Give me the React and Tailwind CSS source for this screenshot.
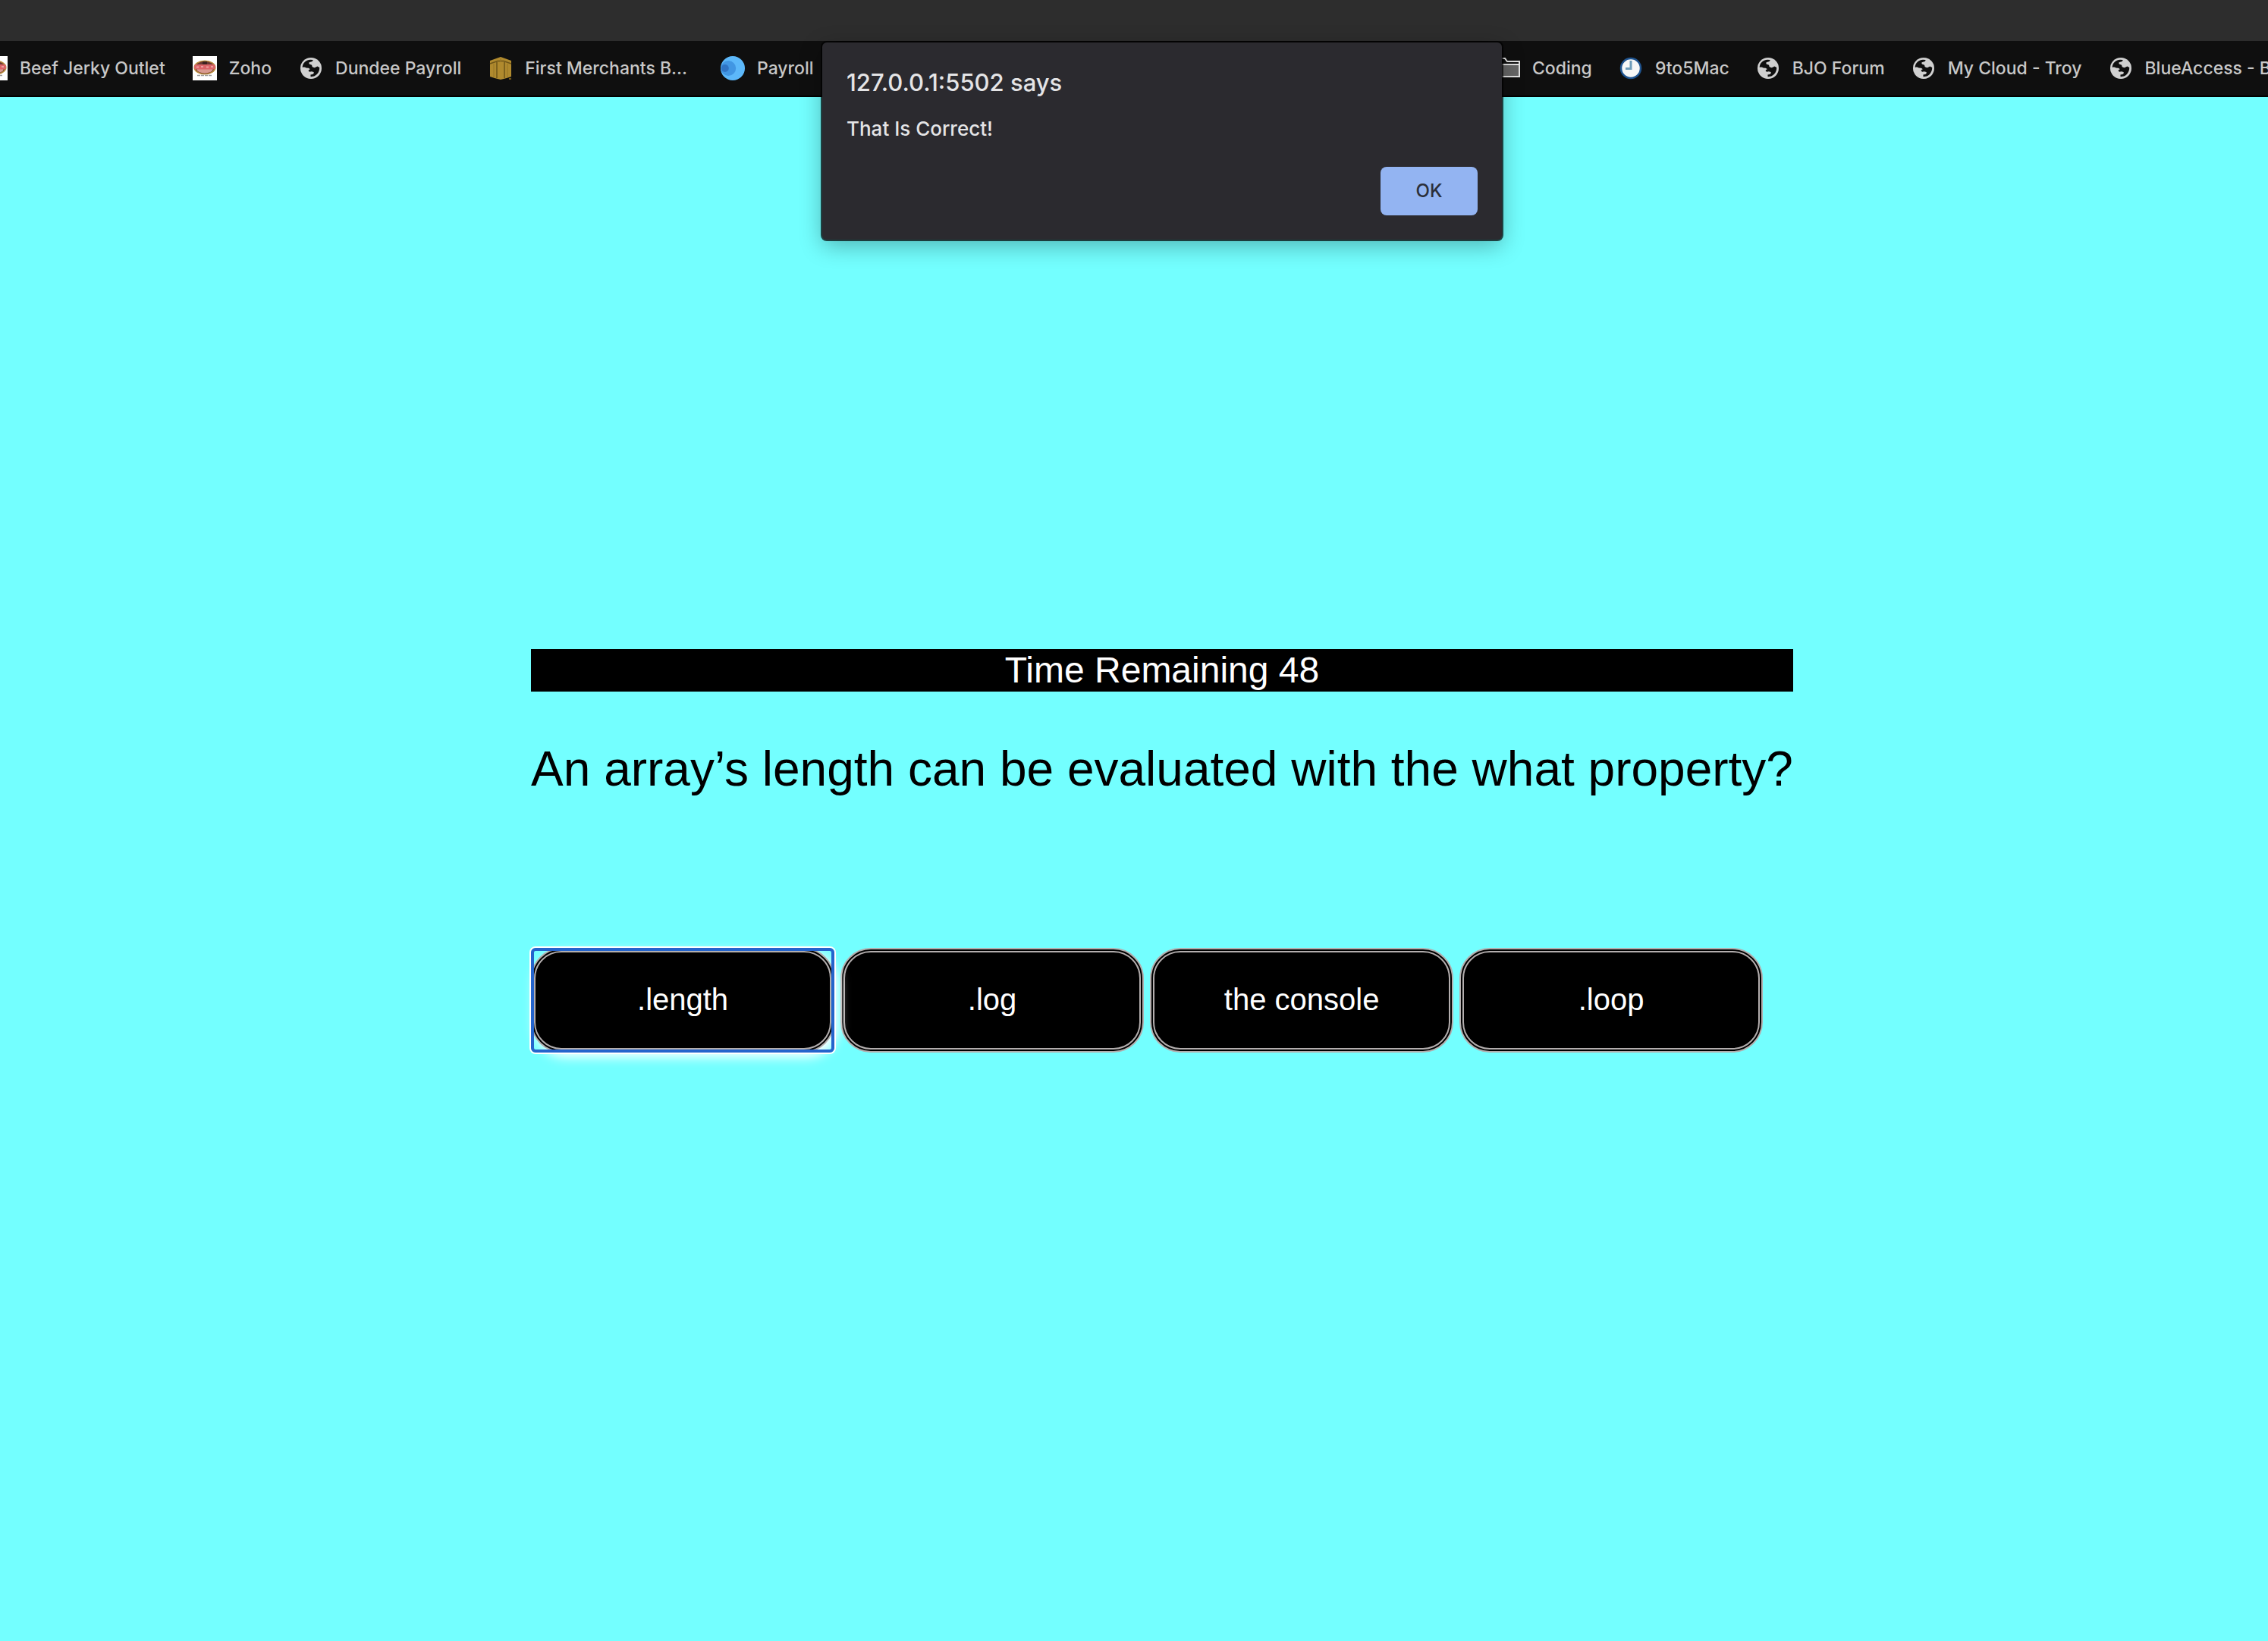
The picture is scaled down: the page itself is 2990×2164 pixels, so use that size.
function GlobeIcon() {
  return (
    <svg viewBox="-2 -2 32 32" className="size-8 shrink-0" aria-hidden="true">
      <circle cx="14" cy="14" r="14" fill="#d0d0d0" />
      <path
        fill="#0f0f0f"
        d="M2.8 11.2C3.9 6.4 8 2.9 13 2.8L16.6 3C16.4 4.6 15.6 5.4 14 5.4L11.6 6.2C11.2 7.4 11.4 8.4 12.4 8.8L14.6 9.4C15.4 9.8 15.4 11 15.6 12C17 13.2 18.8 13.6 20.4 12.6L22.4 11.4L25.2 13C25.4 18 22.6 22.6 18.2 24.4L13.6 25.2L13.4 22.6L16 22C17.6 21.4 18 20.4 17.6 19L14.8 18.2L12.2 18.8L10.6 17.6C10.8 16.2 11.8 15.6 13 15.2L10.8 13.8L7.6 13.4C6 12.4 4.6 12.4 2.8 13Z"
      />
    </svg>
  );
}

function JerkyIcon() {
  return (
    <svg viewBox="0 0 32 32" className="size-8 shrink-0" aria-hidden="true">
      <rect width="32" height="32" fill="#ffffff" />
      <ellipse cx="16" cy="15" rx="14.5" ry="9.5" fill="#b98a3c" />
      <ellipse cx="16" cy="15" rx="12.5" ry="8" fill="#6b3a34" />
      <ellipse cx="16" cy="17.5" rx="10.5" ry="5" fill="#d99a90" />
      <rect x="2" y="11" width="28" height="6.5" rx="3" fill="#dc6468" />
      <path d="M5 14.5h3M11 14h3M18 14.5h3M24 14h3" stroke="#eda0a0" strokeWidth="2" />
      <path d="M13 7h6v4h-6z" fill="#3d2422" />
      <path d="M6 25.5h20" stroke="#9a9a9a" strokeWidth="1.5" strokeDasharray="4 1" />
    </svg>
  );
}

function BankIcon() {
  return (
    <svg viewBox="0 0 32 32" className="size-8 shrink-0" aria-hidden="true">
      <path d="M2 6L16 1L30 6V27L24 29L16 31L8 29L2 27Z" fill="#b08a2e" />
      <path d="M2 10L12 6.5H20L30 10M11 8V29M21 8V29" fill="none" stroke="#6e5518" strokeWidth="1.5" />
      <path d="M16 3V7M7 10V28M25 10V28" fill="none" stroke="#967425" strokeWidth="1" />
      <rect x="27" y="29" width="3" height="2" fill="#6e5518" />
    </svg>
  );
}

function PayrollIcon() {
  return (
    <svg viewBox="0 0 32 32" className="size-8 shrink-0" aria-hidden="true">
      <circle cx="16" cy="16" r="16" fill="#5cb8fa" />
      <circle cx="10.2" cy="16" r="10" fill="#4196e3" />
      <circle cx="5.8" cy="16" r="5" fill="#2f74c4" />
    </svg>
  );
}

function FolderIcon() {
  return (
    <svg viewBox="0 0 32 32" className="size-8 shrink-0" aria-hidden="true">
      <path d="M3 27V3H12L15 7H31V27Z" fill="#0f0f0f" stroke="#e2e2e2" strokeWidth="2" />
      <path d="M3 11H31V27H3Z" fill="#666666" stroke="#e2e2e2" strokeWidth="2" />
    </svg>
  );
}

function ClockIcon() {
  return (
    <svg viewBox="0 0 32 32" className="size-8 shrink-0" aria-hidden="true">
      <circle cx="16" cy="16" r="13" fill="#f7f7f7" stroke="#1f5490" strokeWidth="2.5" />
      <path d="M16 6V16.5H9" fill="none" stroke="#6f9dbb" strokeWidth="3" />
    </svg>
  );
}

const leftBookmarks = [
  { label: "Beef Jerky Outlet", Icon: JerkyIcon },
  { label: "Zoho", Icon: JerkyIcon },
  { label: "Dundee Payroll", Icon: GlobeIcon },
  { label: "First Merchants B...", Icon: BankIcon, wide: true },
  { label: "Payroll", Icon: PayrollIcon },
];

const rightBookmarks = [
  { label: "Coding", Icon: FolderIcon },
  { label: "9to5Mac", Icon: ClockIcon },
  { label: "BJO Forum", Icon: GlobeIcon },
  { label: "My Cloud - Troy", Icon: GlobeIcon },
  { label: "BlueAccess - B", Icon: GlobeIcon },
];

function Bookmark({ label, Icon, wide }) {
  return (
    <a
      href="#"
      className={
        wide
          ? "flex shrink-0 items-center gap-4 whitespace-nowrap pr-2"
          : "flex shrink-0 items-center gap-4 whitespace-nowrap"
      }
    >
      <Icon />
      <span>{label}</span>
    </a>
  );
}

const answers = [".length", ".log", "the console", ".loop"];
const focusRing =
  "relative shadow-[5px_6px_15px_white] before:absolute before:-inset-[6px] before:rounded-md before:border-4 before:border-[#2464cc] before:shadow-[0_0_0_2px_white] before:content-['']";

export default function App() {
  return (
    <div className="relative flex min-h-screen flex-col overflow-hidden bg-[#73ffff] font-['Liberation_Sans',Arial,sans-serif]">
      <div className="h-[54px] shrink-0 bg-[#2d2d2d]" />
      <nav
        aria-label="Bookmarks"
        className="flex h-[74px] shrink-0 items-center overflow-hidden border-b-2 border-black bg-[#0f0f0f] font-['Inter',sans-serif] text-[23px] font-medium text-[#c8c8c8]"
      >
        <div className="-ml-[22px] flex w-[1994px] shrink-0 gap-9">
          {leftBookmarks.map((b) => (
            <Bookmark key={b.label} {...b} />
          ))}
        </div>
        <div className="flex shrink-0 gap-[35px]">
          {rightBookmarks.map((b) => (
            <Bookmark key={b.label} {...b} />
          ))}
        </div>
      </nav>

      <main className="flex flex-1 flex-col items-center justify-center pb-12 pl-[74px]">
        <div>
          <p className="bg-black text-center text-5xl/[56px] text-white">Time Remaining 48</p>
          <h1 className="mt-16 text-[64px]/[76px] text-black">
            An array’s length can be evaluated with the what property?
          </h1>
          <div className="mt-[198px] flex gap-2">
            {answers.map((a, i) => (
              <button
                key={a}
                type="button"
                className={`h-[138px] w-[400px] rounded-[40px] border-6 border-double border-[#b3aeae] bg-black pb-0.5 text-[40px] text-white ${i === 0 ? focusRing : ""}`}
              >
                {a}
              </button>
            ))}
          </div>
        </div>
      </main>

      <div className="absolute inset-x-0 top-14 flex justify-center pl-[74px]">
        <div
          role="alertdialog"
          aria-labelledby="dialog-title"
          aria-describedby="dialog-message"
          className="w-[896px] rounded-md bg-[#2b2a2f] p-8 font-['Inter',sans-serif] font-medium text-[#e4e4e6] shadow-[0_0_0_2px_rgba(0,0,0,0.7),0_8px_30px_rgba(0,0,0,0.3)]"
        >
          <h2 id="dialog-title" className="text-[31px]/[42px]">127.0.0.1:5502 says</h2>
          <p id="dialog-message" className="mt-6 text-[26px]/[32px]">That Is Correct!</p>
          <div className="mt-[34px] flex justify-end">
            <button
              type="button"
              className="h-16 w-32 rounded-lg bg-[#93b4f2] text-2xl font-medium text-[#2b2f3a]"
            >
              OK
            </button>
          </div>
        </div>
      </div>
    </div>
  );
}
